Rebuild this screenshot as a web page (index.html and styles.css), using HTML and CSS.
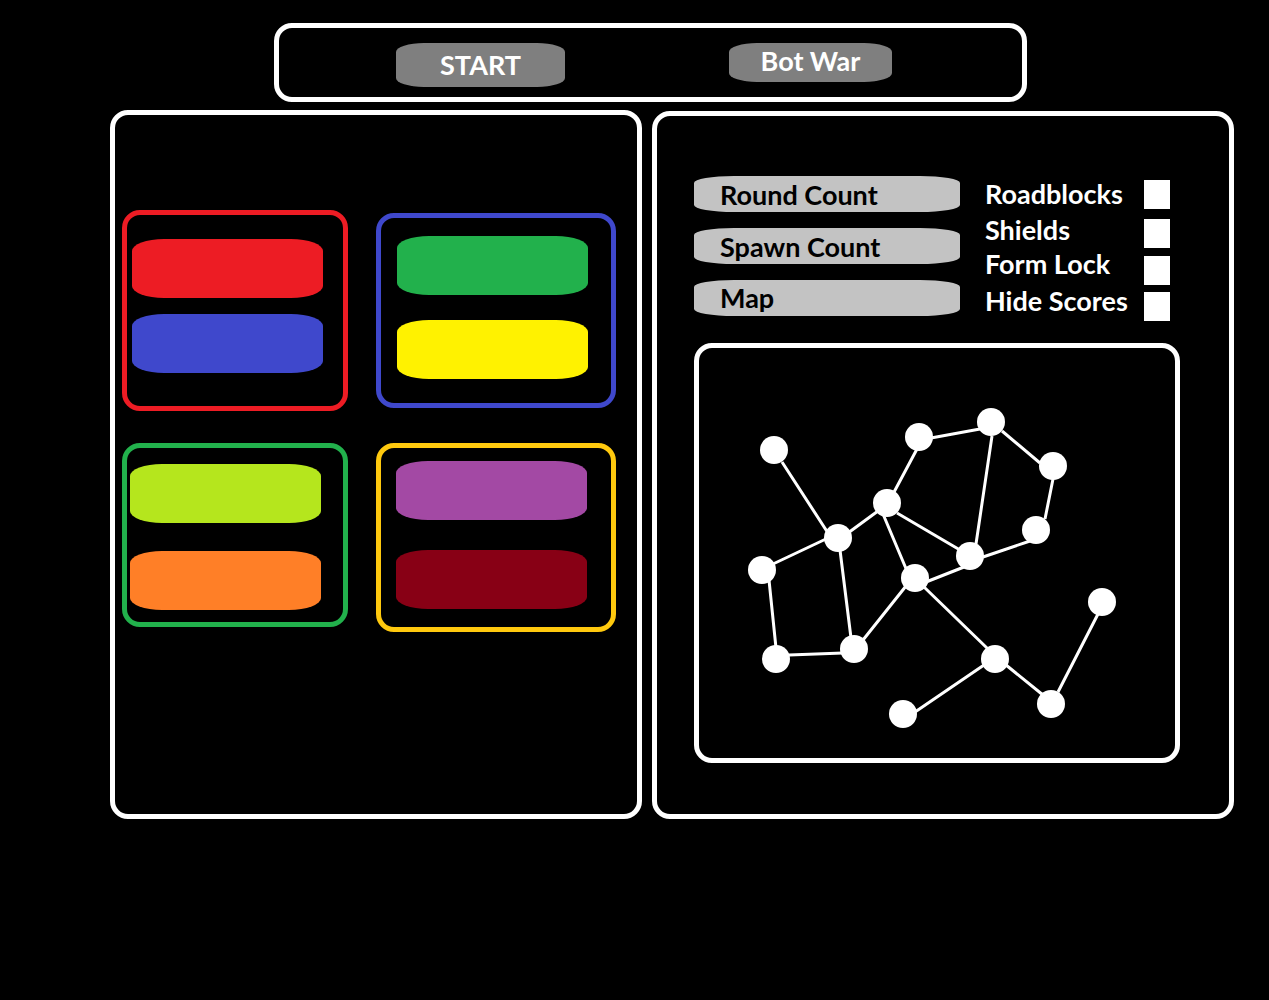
FILE: index.html
```html
<!DOCTYPE html>
<html lang="en">
<head>
<meta charset="utf-8">
<meta name="viewport" content="width=device-width, initial-scale=1">
<title>Bot War</title>
<link rel="stylesheet" href="styles.css">
</head>
<body>
<header class="topbar">
  <button class="action action-start" type="button">START</button>
  <button class="action action-mode" type="button">Bot War</button>
</header>
<main class="lobby">
  <section class="panel teams" aria-label="Teams">
    <ul class="team team-red">
      <li class="slot slot-red"></li>
      <li class="slot slot-blue"></li>
    </ul>
    <ul class="team team-blue">
      <li class="slot slot-green"></li>
      <li class="slot slot-yellow"></li>
    </ul>
    <ul class="team team-green">
      <li class="slot slot-lime"></li>
      <li class="slot slot-orange"></li>
    </ul>
    <ul class="team team-gold">
      <li class="slot slot-purple"></li>
      <li class="slot slot-maroon"></li>
    </ul>
  </section>
  <section class="panel game" aria-label="Game settings">
    <form class="settings">
      <div class="fields">
        <input class="field" type="text" placeholder="Round Count" aria-label="Round Count">
        <input class="field" type="text" placeholder="Spawn Count" aria-label="Spawn Count">
        <select class="field" aria-label="Map"><option>Map</option></select>
      </div>
      <div class="names">
        <label for="roadblocks">Roadblocks</label>
        <label for="shields">Shields</label>
        <label for="form-lock">Form Lock</label>
        <label for="hide-scores">Hide Scores</label>
      </div>
      <div class="checks">
        <input class="check" type="checkbox" id="roadblocks">
        <input class="check" type="checkbox" id="shields">
        <input class="check" type="checkbox" id="form-lock">
        <input class="check" type="checkbox" id="hide-scores">
      </div>
    </form>
    <div class="map">
      <svg class="graph" viewBox="0 0 476 410" role="img" aria-label="Map preview">
        <path class="edges" d="M83 114L129 185M218 101L194 146M232 90L281 81M303 83L341 115M293 88L277 196M354 131L346 171M331 193L284 209M261 202L198 165M179 163L149 185M184 166L208 223M227 234L265 219M129 190L74 216M141 202L152 290M70 232L77 300M90 307L144 305M164 292L207 238M225 239L289 301M285 317L216 364M307 317L344 347M359 344L399 266"/>
        <g class="nodes">
          <circle cx="75" cy="102" r="14"/>
          <circle cx="220" cy="89" r="14"/>
          <circle cx="292" cy="74" r="14"/>
          <circle cx="354" cy="118" r="14"/>
          <circle cx="337" cy="182" r="14"/>
          <circle cx="271" cy="208" r="14"/>
          <circle cx="188" cy="155" r="14"/>
          <circle cx="139" cy="190" r="14"/>
          <circle cx="63" cy="222" r="14"/>
          <circle cx="77" cy="311" r="14"/>
          <circle cx="155" cy="301" r="14"/>
          <circle cx="216" cy="230" r="14"/>
          <circle cx="296" cy="311" r="14"/>
          <circle cx="204" cy="366" r="14"/>
          <circle cx="352" cy="356" r="14"/>
          <circle cx="403" cy="254" r="14"/>
        </g>
      </svg>
    </div>
  </section>
</main>
</body>
</html>
```
FILE: styles.css
```css
* {
  box-sizing: border-box;
}

body {
  margin: 0;
  padding: 23px 35px 23px 110px;
  background: #000;
  color: #fff;
  font: bold 27px/32px Lato, "Open Sans", sans-serif;
}

.topbar {
  display: flex;
  align-items: flex-start;
  justify-content: space-between;
  margin: 0 207px 8px 164px;
  padding: 15px 130px 10px 117px;
  border: 5px solid #fff;
  border-radius: 18px;
}

.action {
  padding: 0;
  border: 0;
  border-radius: 28px / 9px;
  background: #7f7f7f;
  color: inherit;
  font: inherit;
}

.action-start {
  width: 169px;
  height: 44px;
}

.action-mode {
  width: 163px;
  height: 39px;
  padding-bottom: 4px;
}

.lobby {
  display: grid;
  grid-template-columns: 532fr 582fr;
  gap: 10px;
  align-items: end;
}

.panel {
  border: 5px solid #fff;
  border-radius: 18px;
}

.teams {
  display: grid;
  grid-template-columns: 226fr 240fr;
  gap: 32px 28px;
  align-items: center;
  padding: 95px 21px 182px 7px;
}

.team {
  display: flex;
  flex-direction: column;
  margin: 0;
  border: 5px solid;
  border-radius: 18px;
  list-style: none;
}

.team-red {
  gap: 16px;
  padding: 24px 20px 33px 5px;
  border-color: #ed1c24;
}

.team-blue {
  gap: 25px;
  padding: 18px 23px 24px 16px;
  border-color: #3f48cc;
}

.team-green {
  align-self: start;
  gap: 28px;
  padding: 16px 22px 12px 3px;
  border-color: #22b14c;
}

.team-gold {
  gap: 30px;
  padding: 13px 24px 18px 15px;
  border-color: #ffc90e;
}

.slot {
  height: 59px;
  border-radius: 32px / 12px;
}

.slot-red { background: #ed1c24; }
.slot-blue { background: #3f48cc; }
.slot-green { background: #22b14c; }
.slot-yellow { background: #fff200; }
.slot-lime { background: #b5e61d; }
.slot-orange { background: #ff7f27; }
.slot-purple { background: #a349a4; }
.slot-maroon { background: #880015; }

.game {
  display: flex;
  flex-direction: column;
  gap: 27px;
  padding: 60px 49px 51px 37px;
}

.settings {
  display: flex;
  padding-right: 10px;
}

.fields {
  display: flex;
  flex: 1;
  flex-direction: column;
  gap: 16px;
  min-width: 0;
  margin-right: 25px;
}

.field {
  width: 100%;
  height: 36px;
  padding: 0 26px;
  border: 0;
  border-radius: 40px / 7px;
  appearance: none;
  background: #c3c3c3;
  color: #000;
  font: inherit;
}

.field::placeholder {
  color: #000;
  opacity: 1;
}

.names {
  display: grid;
  grid-template-rows: 36px 36px 32px 42px;
  align-items: center;
  width: 159px;
  height: 140px;
  white-space: nowrap;
}

.checks {
  display: grid;
  grid-template-rows: 39px 37px 36px 29px;
  align-items: start;
  padding-top: 4px;
  height: 140px;
}

.check {
  width: 26px;
  height: 29px;
  margin: 0;
  appearance: none;
  background: #fff;
}

.check:checked {
  background: #7f7f7f;
}

.map {
  border: 5px solid #fff;
  border-radius: 18px;
}

.graph {
  display: block;
  width: 100%;
}

.edges {
  fill: none;
  stroke: #fff;
  stroke-width: 3;
}

.nodes {
  fill: #fff;
}
```
